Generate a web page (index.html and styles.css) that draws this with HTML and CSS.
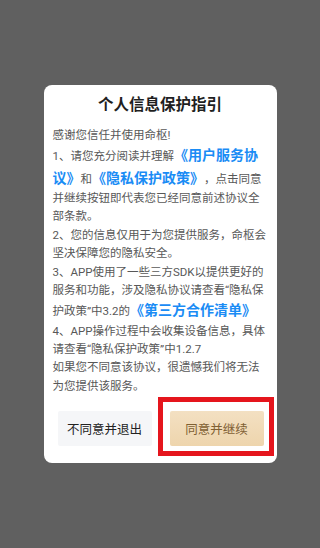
FILE: index.html
```html
<!DOCTYPE html>
<html>

<head>
  <meta charset="utf-8">
  <link rel="stylesheet" href="styles.css">
</head>

<body>
  <div class="privacy-dialog">
    <h2 class="dialog-title">个人信息保护指引</h2>
    <div class="dialog-body">
      <p>感谢您信任并使用命枢!</p>
      <p>1、请您充分阅读并理解<a class="doc-link">《用户服务协议》</a>和<a class="doc-link">《隐私保护政策》</a>，点击同意并继续按钮即代表您已经同意前述协议全部条款。</p>
      <p>2、您的信息仅用于为您提供服务，命枢会坚决保障您的隐私安全。</p>
      <p>3、APP使用了一些三方SDK以提供更好的服务和功能，涉及隐私协议请查看“隐私保护政策”中3.2的<a class="doc-link">《第三方合作清单》</a></p>
      <p>4、APP操作过程中会收集设备信息，具体请查看“隐私保护政策”中1.2.7</p>
      <p>如果您不同意该协议，很遗憾我们将无法为您提供该服务。</p>
    </div>
    <div class="dialog-actions">
      <button type="button" class="btn btn-reject">不同意并退出</button>
      <div class="accept-wrap">
        <button type="button" class="btn btn-accept">同意并继续</button>
        <div class="highlight-frame"></div>
      </div>
    </div>
  </div>
</body>

</html>
```

FILE: styles.css
```css
body {
  margin: 0;
  height: 548px;
  background-color: #606060;
  display: flex;
  align-items: center;
  justify-content: center;
  font-family: Roboto, "Noto Sans CJK SC", sans-serif;
  text-spacing-trim: space-all;
}

.privacy-dialog {
  width: 233px;
  box-sizing: border-box;
  padding: 9px 0 17px;
  background-color: #fff;
  border-radius: 8px;
}

.privacy-dialog .dialog-title {
  margin: 0;
  font-size: 15.5px;
  line-height: 22px;
  font-weight: 700;
  text-align: center;
  color: #1f1f1f;
}

.privacy-dialog .dialog-body {
  margin-top: 10px;
  padding: 0 8px 0 9px;
  font-size: 11.5px;
  line-height: 1.6;
  color: #585858;
}

.privacy-dialog .dialog-body p {
  margin: 0;
}

.privacy-dialog .doc-link {
  font-size: 14px;
  font-weight: 700;
  color: #1a8cf5;
  text-decoration: none;
}

.privacy-dialog .dialog-actions {
  display: flex;
  gap: 18px;
  margin-top: 16px;
  padding: 0 13px 0 14px;
}

.privacy-dialog .btn {
  width: 100%;
  height: 35px;
  border: none;
  border-radius: 2px;
  font-family: inherit;
  font-size: 12.5px;
  padding: 0;
}

.privacy-dialog .btn-reject {
  flex: 1;
  background-color: #f5f6f8;
  color: #222;
}

.privacy-dialog .accept-wrap {
  flex: 1;
  position: relative;
}

.privacy-dialog .btn-accept {
  background: linear-gradient(#f3e0c2, #eed5ad);
  color: #7f6033;
}

.privacy-dialog .highlight-frame {
  position: absolute;
  top: -14px;
  right: -10px;
  bottom: -10px;
  left: -12px;
  border: 5px solid #e5151d;
  pointer-events: none;
}
```
